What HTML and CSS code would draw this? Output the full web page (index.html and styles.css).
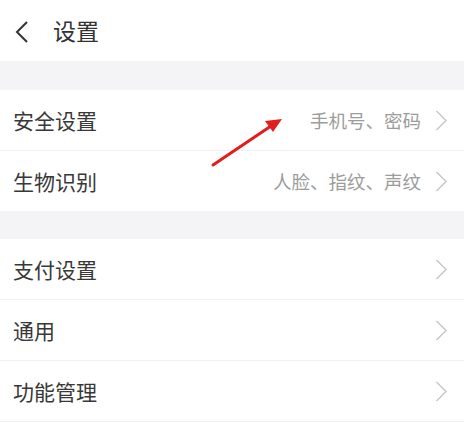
FILE: index.html
```html
<!DOCTYPE html>
<html lang="zh-CN">
<head>
<meta charset="utf-8">
<title>设置</title>
<link rel="stylesheet" href="styles.css">
</head>
<body>
<div class="page">
  <header class="header">
    <svg class="back" width="16" height="22" viewBox="0 0 16 22"><path d="M13 1 L3 11 L13 21" fill="none" stroke="#333" stroke-width="2"/></svg>
    <span class="title">设置</span>
  </header>
  <div class="gap"></div>
  <section class="group">
    <div class="row divided">
      <span class="label">安全设置</span>
      <span class="value">手机号、密码</span>
      <svg class="chev" width="13" height="21" viewBox="0 0 13 21"><path d="M1.5 1 L11 10.5 L1.5 20" fill="none" stroke="#c8c8c8" stroke-width="1.5"/></svg>
    </div>
    <div class="row">
      <span class="label">生物识别</span>
      <span class="value">人脸、指纹、声纹</span>
      <svg class="chev" width="13" height="21" viewBox="0 0 13 21"><path d="M1.5 1 L11 10.5 L1.5 20" fill="none" stroke="#c8c8c8" stroke-width="1.5"/></svg>
    </div>
  </section>
  <div class="gap gap2"></div>
  <section class="group">
    <div class="row divided">
      <span class="label">支付设置</span>
      <span class="value"></span>
      <svg class="chev" width="13" height="21" viewBox="0 0 13 21"><path d="M1.5 1 L11 10.5 L1.5 20" fill="none" stroke="#c8c8c8" stroke-width="1.5"/></svg>
    </div>
    <div class="row divided">
      <span class="label">通用</span>
      <span class="value"></span>
      <svg class="chev" width="13" height="21" viewBox="0 0 13 21"><path d="M1.5 1 L11 10.5 L1.5 20" fill="none" stroke="#c8c8c8" stroke-width="1.5"/></svg>
    </div>
    <div class="row divided">
      <span class="label">功能管理</span>
      <span class="value"></span>
      <svg class="chev" width="13" height="21" viewBox="0 0 13 21"><path d="M1.5 1 L11 10.5 L1.5 20" fill="none" stroke="#c8c8c8" stroke-width="1.5"/></svg>
    </div>
  </section>
  <svg class="arrow" width="90" height="60" viewBox="0 0 90 60">
    <line x1="4" y1="52" x2="62" y2="13" stroke="#e01e1e" stroke-width="3" stroke-linecap="round"/>
    <polygon points="73,6 56,8 64,19" fill="#e01e1e"/>
  </svg>
</div>
</body>
</html>
```
FILE: styles.css
```css
html, body {
  margin: 0;
  padding: 0;
  background: #ffffff;
}
body {
  font-family: "Noto Sans CJK SC", "Noto Sans", sans-serif;
  color: #333333;
}
.page {
  position: relative;
  width: 464px;
  height: 431px;
  overflow: hidden;
  background: #ffffff;
}
.header {
  height: 61px;
  display: flex;
  align-items: center;
  padding-left: 14px;
  box-sizing: border-box;
}
.back {
  display: block;
  margin-top: 2px;
}
.title {
  margin-left: 23px;
  font-size: 23px;
  line-height: 1;
  color: #333333;
}
.gap {
  height: 29px;
  background: #f4f4f6;
}
.gap2 {
  height: 28px;
}
.group {
  background: #ffffff;
}
.row {
  height: 60px;
  display: flex;
  align-items: center;
  padding-left: 13px;
  padding-right: 16px;
  position: relative;
}
.row.divided {
  height: 61px;
  box-sizing: border-box;
  border-bottom: 1px solid #f0f0f0;
}
.label {
  font-size: 21px;
  line-height: 1;
  color: #383838;
  flex: 1;
}
.value {
  font-size: 18.5px;
  line-height: 1;
  color: #9c9c9c;
  margin-right: 14px;
}
.chev {
  display: block;
}
.arrow {
  position: absolute;
  left: 209px;
  top: 113px;
}
```
